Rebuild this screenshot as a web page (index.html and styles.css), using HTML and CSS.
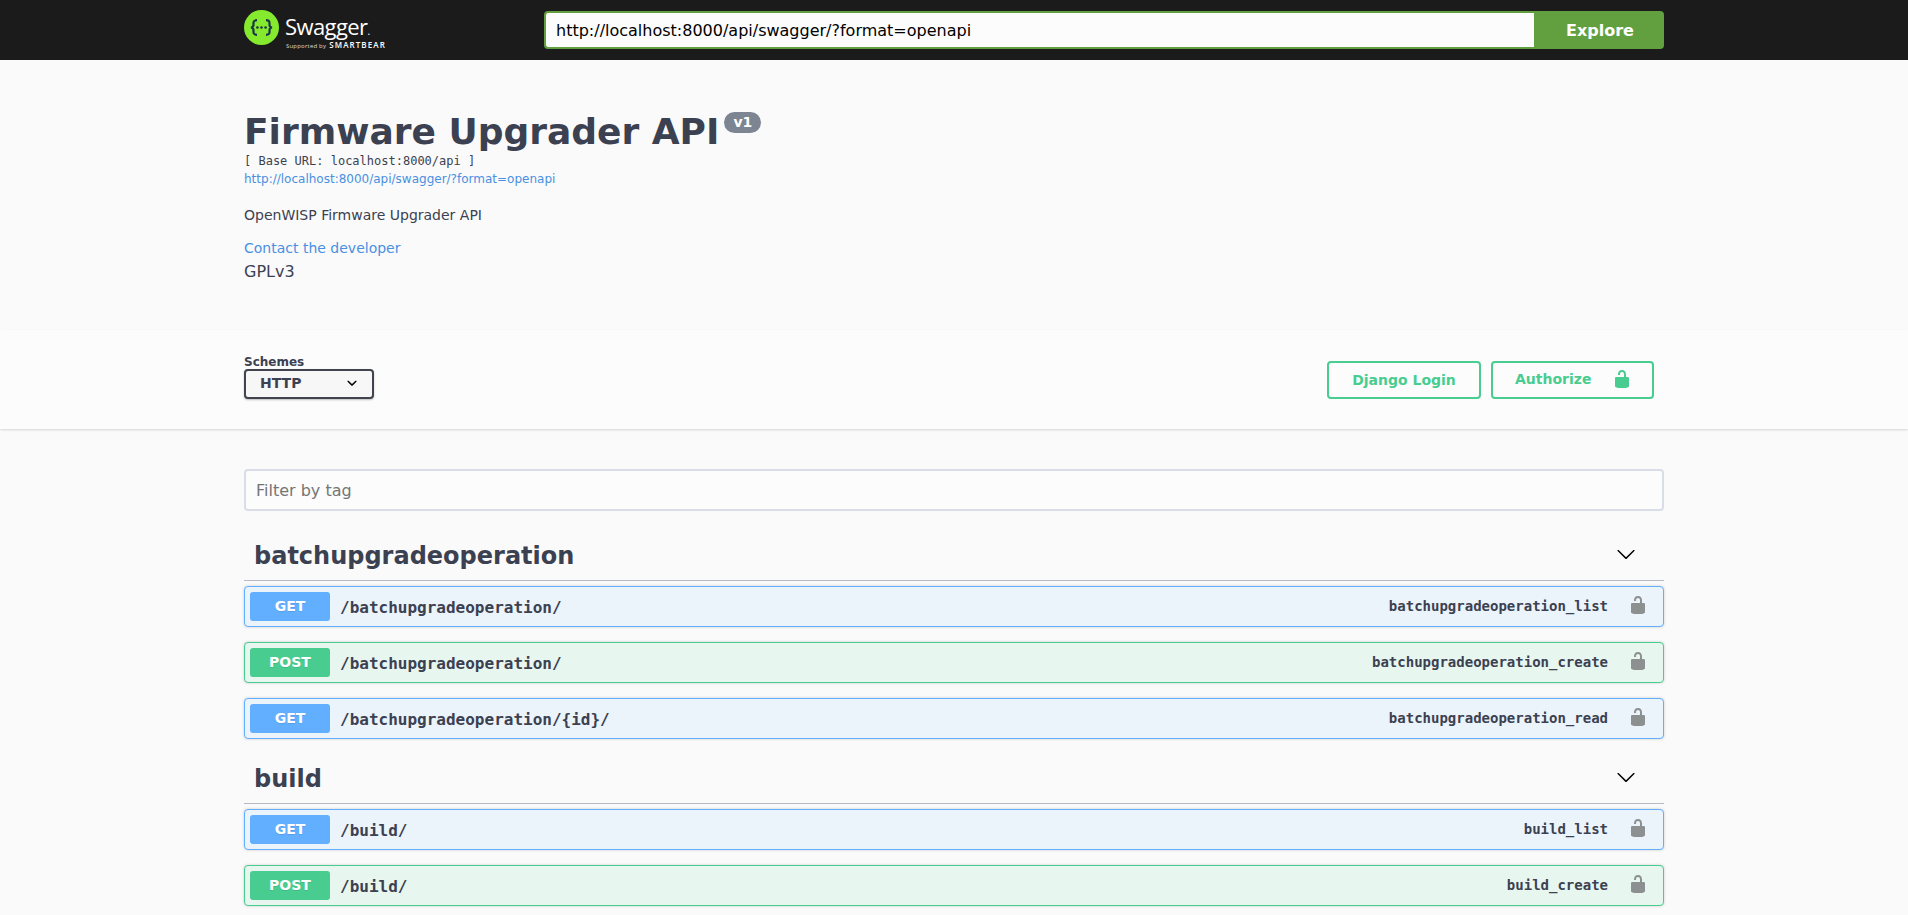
FILE: index.html
```html
<!DOCTYPE html>
<html lang="en">
<head>
<meta charset="utf-8">
<title>Firmware Upgrader API</title>
<link rel="stylesheet" href="styles.css">
</head>
<body>
<svg class="defs" width="0" height="0">
  <symbol id="unlocked" viewBox="0 0 20 20"><path d="M15.8 8H14V5.6C14 2.703 12.665 1 10 1 7.334 1 6 2.703 6 5.6V6h2v-.801C8 3.754 8.797 3 10 3c1.203 0 2 .754 2 2.199V8H4c-.553 0-1 .646-1 1.199V17c0 .549.428 1.139.951 1.307l1.197.387C5.672 18.861 6.55 19 7.1 19h5.8c.549 0 1.428-.139 1.951-.307l1.196-.387c.524-.167.953-.757.953-1.306V9.199C17 8.646 16.352 8 15.8 8z"/></symbol>
  <symbol id="arrow" viewBox="0 0 20 20"><path d="M17.418 6.109c.272-.268.709-.268.979 0s.271.701 0 .969l-7.908 7.83c-.27.268-.707.268-.979 0l-7.908-7.83c-.27-.268-.27-.701 0-.969.271-.268.709-.268.979 0L10 13.25l7.418-7.141z"/></symbol>
  <symbol id="small-arrow" viewBox="0 0 20 20"><path d="M13.418 7.859c.271-.268.709-.268.978 0 .27.268.272.701 0 .969l-3.908 3.83c-.27.268-.707.268-.979 0l-3.908-3.83c-.27-.267-.27-.701 0-.969.271-.268.709-.268.978 0L10 11l3.418-3.141z"/></symbol>
</svg>

<header class="topbar">
  <div class="wrapper topbar-inner">
    <a class="logo">
      <svg class="logo-mark" viewBox="0 0 35 35" width="35" height="35">
        <circle cx="17.5" cy="17.5" r="17.5" fill="#85ea2d"/>
        <g fill="none" stroke="#173647" stroke-width="2.2">
          <path d="M13 10.2c-3 0-3.500.9-3.500 2.700 0 2.800.2 4.200-2.500 4.600 2.700.4 2.500 1.800 2.500 4.600 0 1.800.5 2.700 3.500 2.700"/>
          <path d="M22 10.200c3 0 3.500.9 3.500 2.700 0 2.800-.2 4.200 2.500 4.600-2.700.4-2.500 1.800-2.500 4.600 0 1.800-.5 2.700-3.500 2.700"/>
        </g>
        <g fill="#173647"><circle cx="13.400" cy="17.500" r="1.300"/><circle cx="17.500" cy="17.500" r="1.300"/><circle cx="21.600" cy="17.500" r="1.300"/></g>
      </svg>
      <span class="logo-text">
        <span class="logo-name">Swagger<span class="logo-dot">.</span></span>
        <span class="logo-by"><span>Supported by</span><b>SMARTBEAR</b></span>
      </span>
    </a>
    <form class="download">
      <input class="url-input" type="text" value="http://localhost:8000/api/swagger/?format=openapi">
      <button class="explore" type="button">Explore</button>
    </form>
  </div>
</header>

<section class="wrapper info">
  <h1 class="title">Firmware Upgrader API<span class="version">v1</span></h1>
  <div class="base-url">[ Base URL: localhost:8000/api ]</div>
  <a class="spec-link">http://localhost:8000/api/swagger/?format=openapi</a>
  <p class="description">OpenWISP Firmware Upgrader API</p>
  <a class="contact">Contact the developer</a>
  <div class="license">GPLv3</div>
</section>

<section class="schemes">
  <div class="wrapper schemes-inner">
    <div class="scheme-picker">
      <span class="scheme-label">Schemes</span>
      <div class="select"><span>HTTP</span><svg width="20" height="20"><use href="#small-arrow"/></svg></div>
    </div>
    <div class="auth">
      <button class="btn login" type="button">Django Login</button>
      <button class="btn authorize" type="button"><span>Authorize</span><svg width="20" height="20"><use href="#unlocked"/></svg></button>
    </div>
  </div>
</section>

<main class="wrapper operations">
  <input class="filter" type="text" placeholder="Filter by tag">

  <section class="tag">
    <h2 class="tag-head"><span>batchupgradeoperation</span><svg width="20" height="20"><use href="#arrow"/></svg></h2>
    <div class="op get"><span class="method">GET</span><span class="path">/batchupgradeoperation/</span><span class="op-id">batchupgradeoperation_list</span><svg width="20" height="20"><use href="#unlocked"/></svg></div>
    <div class="op post"><span class="method">POST</span><span class="path">/batchupgradeoperation/</span><span class="op-id">batchupgradeoperation_create</span><svg width="20" height="20"><use href="#unlocked"/></svg></div>
    <div class="op get"><span class="method">GET</span><span class="path">/batchupgradeoperation/{id}/</span><span class="op-id">batchupgradeoperation_read</span><svg width="20" height="20"><use href="#unlocked"/></svg></div>
  </section>

  <section class="tag">
    <h2 class="tag-head"><span>build</span><svg width="20" height="20"><use href="#arrow"/></svg></h2>
    <div class="op get"><span class="method">GET</span><span class="path">/build/</span><span class="op-id">build_list</span><svg width="20" height="20"><use href="#unlocked"/></svg></div>
    <div class="op post"><span class="method">POST</span><span class="path">/build/</span><span class="op-id">build_create</span><svg width="20" height="20"><use href="#unlocked"/></svg></div>
  </section>
</main>
</body>
</html>
```
FILE: styles.css
```css
*, *::before, *::after { box-sizing: border-box; }

html, body { height: 100%; overflow: hidden; }

body {
  margin: 0;
  background: #fafafa;
  color: #3b4151;
  font-family: "DejaVu Sans", sans-serif;
}

.defs { position: absolute; }

h1, h2, p { margin: 0; }

button, input { font-family: inherit; margin: 0; outline: none; }

.wrapper {
  width: 100%;
  max-width: 1460px;
  margin: 0 auto;
  padding: 0 20px;
}

/* Top bar */
.topbar { height: 60px; background: #1b1b1b; }

.topbar-inner { display: flex; align-items: flex-start; }

.logo { display: flex; width: 300px; padding-top: 10px; color: #fff; }

.logo-mark { flex: none; }

.logo-text {
  display: flex;
  flex-direction: column;
  padding-left: 6px;
  font-family: "Open Sans", sans-serif;
  white-space: nowrap;
}

.logo-name { height: 31px; font-size: 22px; line-height: 32px; letter-spacing: -0.6px; }

.logo-dot { font-size: 10px; }

.logo-by {
  display: flex;
  align-items: baseline;
  gap: 3px;
  padding-left: 1px;
  font-size: 6px;
  line-height: 8px;
  letter-spacing: 0.2px;
  color: #ddd;
}

.logo-by b {
  font-size: 8px;
  font-weight: 600;
  letter-spacing: 1.1px;
  color: #fff;
}

.download { display: flex; flex: 1; padding-top: 11px; }

.url-input {
  flex: 1;
  height: 38px;
  padding: 0 10px;
  border: 2px solid #62a03f;
  border-right: 0;
  border-radius: 4px 0 0 4px;
  background: #fcfcfc;
  color: #000;
  font-size: 16px;
}

.explore {
  width: 130px;
  height: 38px;
  padding: 0 0 0 2px;
  border: 0;
  border-radius: 0 4px 4px 0;
  background: #62a03f;
  color: #fff;
  font-size: 16px;
  font-weight: bold;
}

/* API information */
.info { height: 270px; padding-top: 51px; }

.title {
  display: flex;
  align-items: flex-start;
  height: 41px;
  font-size: 36px;
  line-height: 42px;
}

.version {
  margin: 1px 0 0 5px;
  padding: 0 9px;
  border-radius: 57px;
  background: #7d8492;
  color: #fff;
  font-size: 14px;
  line-height: 21px;
}

.base-url {
  font: 12px/18px "DejaVu Sans Mono", monospace;
}

.spec-link, .contact { display: block; color: #4990e2; }

.spec-link { font-size: 12px; line-height: 18px; }

.description { margin-top: 17px; font-size: 14px; line-height: 20px; }

.contact { margin-top: 13px; font-size: 14px; line-height: 20px; }

.license { margin-top: 2px; font-size: 16px; line-height: 24px; }

/* Schemes and authorization */
.schemes {
  height: 99px;
  background: #fcfcfc;
  box-shadow: 0 1px 2px rgba(0, 0, 0, .15);
}

.schemes-inner { display: flex; justify-content: space-between; }

.scheme-picker { display: flex; flex-direction: column; padding-top: 25px; }

.scheme-label { font-size: 12px; font-weight: bold; line-height: 14px; }

.select {
  display: flex;
  justify-content: space-between;
  width: 130px;
  height: 30px;
  padding: 2px 10px 0 14px;
  border: 2px solid #41444e;
  border-radius: 4px;
  background: #f7f7f7;
  box-shadow: 0 1px 2px rgba(0, 0, 0, .25);
  font-size: 14px;
  font-weight: bold;
  line-height: 20px;
}

.auth { display: flex; gap: 10px; padding: 31px 10px 0 0; }

.btn {
  height: 38px;
  padding: 0;
  border: 2px solid #49cc90;
  border-radius: 4px;
  background: transparent;
  color: #49cc90;
  font-size: 14px;
  font-weight: bold;
}

.login { width: 154px; }

.authorize {
  display: flex;
  justify-content: space-between;
  width: 163px;
  padding: 6px 20px 0 22px;
  line-height: 20px;
}

.authorize svg { fill: #49cc90; }

/* Operations */
.operations { padding-top: 40px; }

.filter {
  display: block;
  width: 100%;
  height: 42px;
  padding: 0 10px;
  border: 2px solid #d8dde7;
  border-radius: 4px;
  background: #fcfcfc;
  font-size: 16px;
}

.filter::placeholder { color: #757575; }

.tag { padding-top: 20px; }

.tag + .tag { padding-top: 0; }

.tag-head {
  display: flex;
  align-items: center;
  justify-content: space-between;
  height: 50px;
  margin-bottom: 5px;
  padding: 0 28px 0 10px;
  border-bottom: 1px solid #b5bac3;
  font-size: 24px;
}

.tag-head svg { margin-bottom: 4px; }

.op {
  display: flex;
  align-items: center;
  height: 41px;
  margin-bottom: 15px;
  padding: 0 15px 0 5px;
  border: 1px solid;
  border-radius: 4px;
  box-shadow: 0 0 3px rgba(0, 0, 0, .19);
}

.op svg { margin: -4px 0 0 20px; fill: #8c9091; }

.get { border-color: #61affe; background: #ebf3fb; }

.post { border-color: #49cc90; background: #e8f6f0; }

.method {
  width: 80px;
  height: 29px;
  border-radius: 3px;
  color: #fff;
  font-size: 14px;
  font-weight: bold;
  line-height: 28px;
  text-align: center;
  text-shadow: 0 1px 0 rgba(0, 0, 0, .1);
}

.get .method { background: #61affe; }

.post .method { background: #49cc90; }

.path, .op-id { font-family: "DejaVu Sans Mono", monospace; font-weight: bold; }

.path { flex: 1; padding: 2px 10px 0; font-size: 16px; }

.op-id { padding-bottom: 2px; font-size: 14px; }
```
